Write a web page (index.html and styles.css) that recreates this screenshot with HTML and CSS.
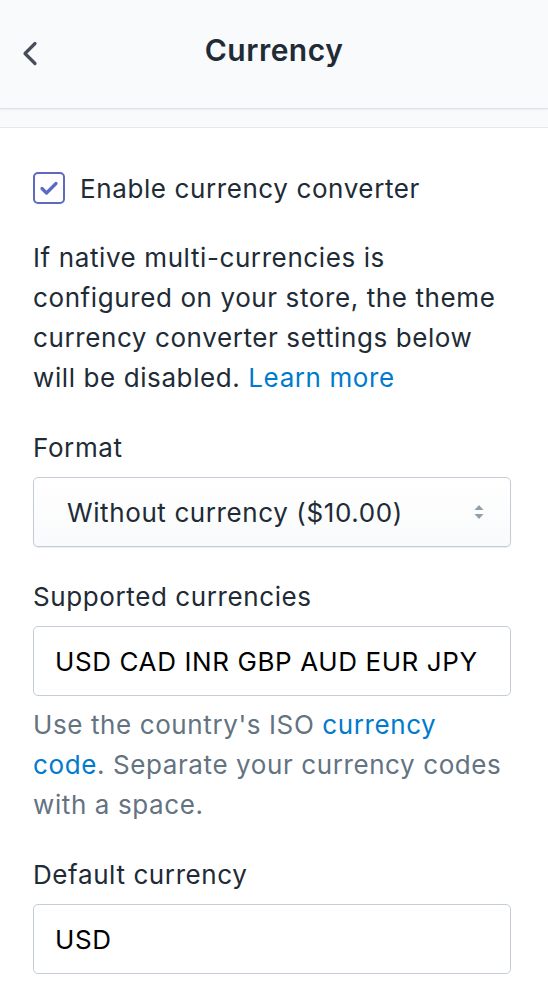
FILE: index.html
```html
<!DOCTYPE html>
<html>
<head>
<meta charset="utf-8">
<link rel="stylesheet" href="styles.css">
</head>
<body>
<header class="topbar">
  <button class="back" aria-label="Back">
    <svg width="20" height="28" viewBox="0 0 20 28"><path d="M14 3.5 L4 13.5 L14 23.5" fill="none" stroke="#454f5b" stroke-width="3.2" stroke-linecap="round" stroke-linejoin="round"/></svg>
  </button>
  <h1 class="title">Currency</h1>
</header>
<div class="strip"></div>
<main class="content">
  <label class="check-row">
    <span class="checkbox">
      <svg width="22" height="22" viewBox="0 0 22 22"><path d="M4 11.5 L8.5 16 L18 6.5" fill="none" stroke="#5c6ac4" stroke-width="3.2" stroke-linecap="round" stroke-linejoin="round"/></svg>
    </span>
    <span class="check-label">Enable currency converter</span>
  </label>
  <p class="info">If native multi-currencies is configured on your store, the theme currency converter settings below will be disabled. <a class="link" href="#">Learn more</a></p>

  <div class="field">
    <div class="label">Format</div>
    <div class="select">
      <span class="select-text">Without currency ($10.00)</span>
      <svg class="arrows" width="14" height="20" viewBox="0 0 14 20"><path d="M7 3 L11.5 8 L2.5 8 Z" fill="#919eab"/><path d="M2.5 12 L11.5 12 L7 17 Z" fill="#919eab"/></svg>
    </div>
  </div>

  <div class="field">
    <div class="label">Supported currencies</div>
    <div class="input">USD CAD INR GBP AUD EUR JPY</div>
    <p class="help">Use the country's ISO <a class="link" href="#">currency code</a>. Separate your currency codes with a space.</p>
  </div>

  <div class="field">
    <div class="label">Default currency</div>
    <div class="input">USD</div>
  </div>
</main>
</body>
</html>
```
FILE: styles.css
```css
* { box-sizing: border-box; }
html, body { margin: 0; padding: 0; background: #fff; }
body {
  font-family: Inter, "Noto Sans", Roboto, sans-serif;
  color: #212b36;
  width: 548px;
  height: 1008px;
  overflow: hidden;
  font-size: 26px;
  letter-spacing: 0.6px;
}
.topbar {
  height: 109px;
  background: #f9fafb;
  border-bottom: 1px solid #dfe3e8;
  box-shadow: 0 1px 2px rgba(0,0,0,0.06);
  display: flex;
  align-items: center;
  justify-content: center;
  position: relative;
}
.back {
  position: absolute;
  left: 21px;
  top: 40px;
  border: 0;
  background: none;
  padding: 0;
  display: flex;
}
.title {
  margin: 0 0 8px;
  font-size: 30px;
  font-weight: 600;
  color: #212b36;
  letter-spacing: 0.5px;
}
.strip {
  height: 19px;
  background: #f9fafb;
  border-bottom: 1px solid #e6e9ec;
}
.content {
  padding: 44px 33px 0 33px;
}
.check-row {
  display: flex;
  align-items: center;
  gap: 15px;
  height: 32px;
}
.checkbox {
  width: 32px;
  height: 32px;
  border: 2px solid #5c6ac4;
  border-radius: 5px;
  background: #fff;
  display: flex;
  align-items: center;
  justify-content: center;
}
.check-label {
  color: #212b36;
}
.info {
  margin: 34px 0 0;
  line-height: 40px;
  color: #212b36;
}
.link {
  color: #007ace;
  text-decoration: none;
}
.field {
  margin-top: 30px;
}
.label {
  line-height: 40px;
  color: #212b36;
  margin-bottom: 9px;
}
.select {
  height: 70px;
  width: 478px;
  border: 1px solid #c4cdd5;
  border-radius: 5px;
  background: linear-gradient(#fff, #f9fafb);
  box-shadow: 0 1px 1px rgba(22,29,37,0.08);
  display: flex;
  align-items: center;
  justify-content: space-between;
  padding: 0 24px 0 33px;
}
.select-text {
  color: #212b36;
}
.input {
  height: 70px;
  width: 478px;
  border: 1px solid #c4cdd5;
  border-radius: 5px;
  background: #fff;
  display: flex;
  align-items: center;
  padding: 0 21px;
  color: #000;
}
.help {
  margin: 9px 0 0;
  line-height: 40px;
  color: #637381;
}
```
